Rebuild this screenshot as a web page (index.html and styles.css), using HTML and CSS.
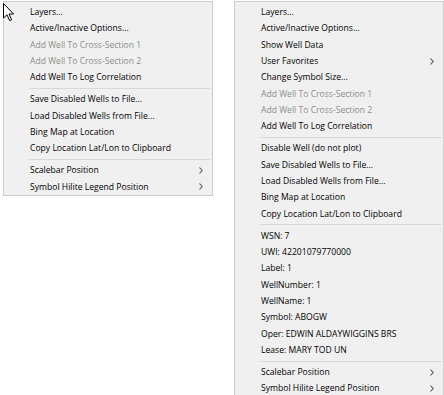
FILE: index.html
```html
<!DOCTYPE html>
<html>
<head>
<meta charset="utf-8">
<link rel="stylesheet" href="styles.css">
</head>
<body>
<div class="screen">
  <svg class="cursor" width="12" height="19" viewBox="0 0 12 19">
    <path d="M0.5 0.5 L0.5 15 L4 11.8 L6.6 17.6 L8.6 16.8 L6 11 L10.6 11 Z" fill="#fff" stroke="#000" stroke-width="1" stroke-linejoin="miter"/>
  </svg>
  <div class="menu">
    <div class="item">Layers...</div>
    <div class="item">Active/Inactive Options...</div>
    <div class="item disabled">Add Well To Cross-Section 1</div>
    <div class="item disabled">Add Well To Cross-Section 2</div>
    <div class="item">Add Well To Log Correlation</div>
    <div class="sep"></div>
    <div class="item">Save Disabled Wells to File...</div>
    <div class="item">Load Disabled Wells from File...</div>
    <div class="item">Bing Map at Location</div>
    <div class="item">Copy Location Lat/Lon to Clipboard</div>
    <div class="sep"></div>
    <div class="item">Scalebar Position<svg class="arrow" width="4" height="7" viewBox="0 0 4 7"><path d="M0.5 0.5 L3.2 3.5 L0.5 6.5" fill="none" stroke="#555" stroke-width="1.1"/></svg></div>
    <div class="item">Symbol Hilite Legend Position<svg class="arrow" width="4" height="7" viewBox="0 0 4 7"><path d="M0.5 0.5 L3.2 3.5 L0.5 6.5" fill="none" stroke="#555" stroke-width="1.1"/></svg></div>
  </div>
  <div class="menu">
    <div class="item">Layers...</div>
    <div class="item">Active/Inactive Options...</div>
    <div class="item">Show Well Data</div>
    <div class="item">User Favorites<svg class="arrow" width="4" height="7" viewBox="0 0 4 7"><path d="M0.5 0.5 L3.2 3.5 L0.5 6.5" fill="none" stroke="#555" stroke-width="1.1"/></svg></div>
    <div class="item">Change Symbol Size...</div>
    <div class="item disabled">Add Well To Cross-Section 1</div>
    <div class="item disabled">Add Well To Cross-Section 2</div>
    <div class="item">Add Well To Log Correlation</div>
    <div class="sep"></div>
    <div class="item">Disable Well (do not plot)</div>
    <div class="item">Save Disabled Wells to File...</div>
    <div class="item">Load Disabled Wells from File...</div>
    <div class="item">Bing Map at Location</div>
    <div class="item">Copy Location Lat/Lon to Clipboard</div>
    <div class="sep"></div>
    <div class="item">WSN: 7</div>
    <div class="item">UWI: 42201079770000</div>
    <div class="item">Label: 1</div>
    <div class="item">WellNumber: 1</div>
    <div class="item">WellName: 1</div>
    <div class="item">Symbol: ABOGW</div>
    <div class="item">Oper: EDWIN ALDAYWIGGINS BRS</div>
    <div class="item">Lease: MARY TOD UN</div>
    <div class="sep"></div>
    <div class="item">Scalebar Position<svg class="arrow" width="4" height="7" viewBox="0 0 4 7"><path d="M0.5 0.5 L3.2 3.5 L0.5 6.5" fill="none" stroke="#555" stroke-width="1.1"/></svg></div>
    <div class="item">Symbol Hilite Legend Position<svg class="arrow" width="4" height="7" viewBox="0 0 4 7"><path d="M0.5 0.5 L3.2 3.5 L0.5 6.5" fill="none" stroke="#555" stroke-width="1.1"/></svg></div>
  </div>
</div>
</body>
</html>
```
FILE: styles.css
```css
html, body {
  margin: 0;
  padding: 0;
  background: #ffffff;
  overflow: hidden;
}
.screen {
  position: relative;
  display: flex;
  align-items: flex-start;
  gap: 21px;
  padding: 1px 0 0 3px;
  font-family: "Open Sans", "Noto Sans", sans-serif;
  font-size: 8.6px;
  font-weight: 500;
  color: #000;
}
.cursor {
  position: absolute;
  left: 3px;
  top: 3px;
}
.menu {
  box-sizing: border-box;
  width: 210px;
  flex: none;
  background: #f0f0f0;
  border: 1px solid #cccccc;
  padding: 2px 0 0;
}
.item {
  display: flex;
  align-items: center;
  height: 16.33px;
  padding: 0 9px 0 26px;
  white-space: nowrap;
}
.item.disabled {
  color: #8d8d8d;
}
.arrow {
  margin-left: auto;
}
.sep {
  height: 1px;
  background: #d9d9d9;
  margin: 2.5px 2px 2.17px 25px;
}
```
